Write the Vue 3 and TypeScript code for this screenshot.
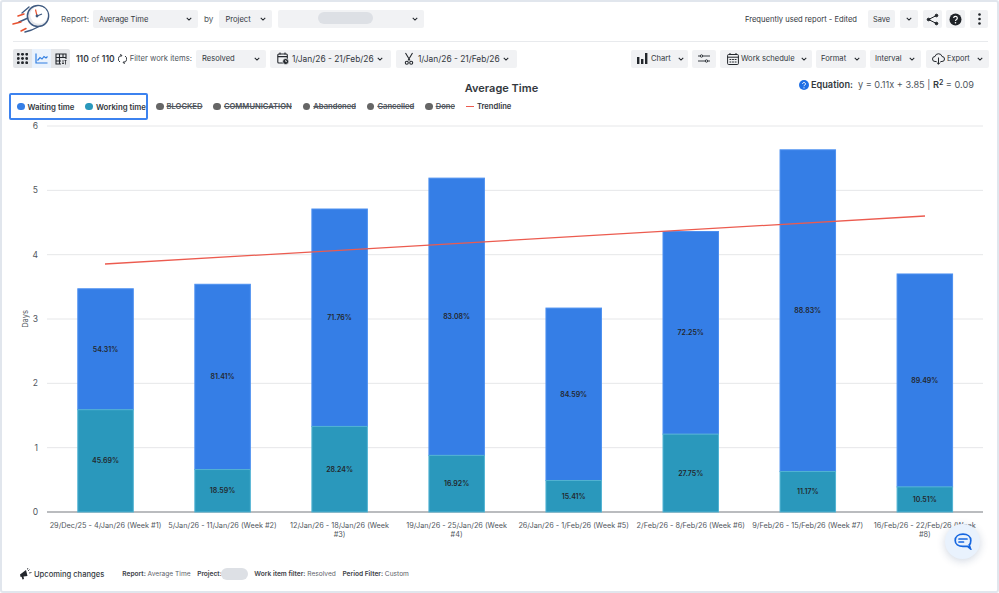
<template>
  <div class="card">
    <header class="row-top">
      <svg class="logo" width="38" height="30" viewBox="0 0 38 30" fill="none">
        <path d="M10 9 L17 3 M7 18 L16 14 M13 28 Q20 26.5 26 23" stroke="#3f5a80" stroke-width="1.4" stroke-linecap="round" />
        <path d="M6 12 L12 10 M1 20 L9 18 M9 27 L14 24.5" stroke="#e8512f" stroke-width="1.5" stroke-linecap="round" />
        <circle cx="26" cy="12" r="10.6" fill="#e6e8ec" stroke="#3f5a80" stroke-width="1.5" />
        <circle cx="27" cy="11" r="8.8" fill="#fff" />
        <path d="M23.5 5.5 L25 12" stroke="#e8512f" stroke-width="1.2" />
        <path d="M25 12 L30 10" stroke="#3f5a80" stroke-width="1.2" />
        <circle cx="25" cy="12" r="1.4" fill="#3f5a80" />
      </svg>
      <span class="lbl report-lbl">Report:</span>
      <div class="ctl w105">Average Time<svg class="chev" viewBox="0 0 8 5"><path d="M1 1l3 3 3-3" /></svg></div>
      <span class="lbl by-lbl">by</span>
      <div class="ctl w53">Project<svg class="chev" viewBox="0 0 8 5"><path d="M1 1l3 3 3-3" /></svg></div>
      <div class="ctl w146"><span class="pill"></span><svg class="chev" viewBox="0 0 8 5"><path d="M1 1l3 3 3-3" /></svg></div>
      <span class="grow"></span>
      <span class="freq">Frequently used report - Edited</span>
      <div class="ctl save">Save</div>
      <div class="ctl sq18"><svg class="chev" viewBox="0 0 8 5"><path d="M1 1l3 3 3-3" /></svg></div>
      <div class="ctl sq19">
        <svg width="13" height="13" viewBox="0 0 13 13" fill="none" stroke="#1f2328" stroke-width="1">
          <path d="M10.5 2.5 L2.5 6.5 L10.5 10.5" />
          <circle cx="10.5" cy="2.5" r="1.3" fill="#1f2328" /><circle cx="2.5" cy="6.5" r="1.3" fill="#1f2328" /><circle cx="10.5" cy="10.5" r="1.3" fill="#1f2328" />
        </svg>
      </div>
      <div class="ctl sq19">
        <svg width="13" height="13" viewBox="0 0 13 13">
          <circle cx="6.5" cy="6.5" r="6" fill="#1f2328" />
          <path d="M4.7 5.1a1.8 1.8 0 1 1 2.8 1.5c-.7.4-1 .7-1 1.5" fill="none" stroke="#fff" stroke-width="1.2" />
          <circle cx="6.5" cy="9.8" r=".8" fill="#fff" />
        </svg>
      </div>
      <div class="ctl sq18">
        <svg width="3" height="12" viewBox="0 0 3 12" fill="#1f2328"><circle cx="1.5" cy="1.5" r="1.3" /><circle cx="1.5" cy="6" r="1.3" /><circle cx="1.5" cy="10.5" r="1.3" /></svg>
      </div>
    </header>

    <div class="divider"></div>

    <div class="row-tools">
      <div class="seg">
        <span class="seg-b gray">
          <svg width="11" height="11" viewBox="0 0 11 11" fill="#23272c">
            <template v-for="y in [1.3, 5.5, 9.7]" :key="y"><circle v-for="x in [1.3, 5.5, 9.7]" :key="x" :cx="x" :cy="y" r="1.45" /></template>
          </svg>
        </span>
        <span class="seg-b blue">
          <svg width="13" height="11" viewBox="0 0 13 11" fill="none" stroke="#2f7de1" stroke-width="1.2">
            <path d="M1 0.5 V10 H12.5" /><path d="M2.5 7.5 L5 4.5 L7 6 L9 3.5 L11 5 L12.5 3.5" />
          </svg>
        </span>
        <span class="seg-b gray">
          <svg width="12" height="12" viewBox="0 0 12 12" fill="none" stroke="#23272c" stroke-width="1.1">
            <path d="M6 11 H1 V1 H11 V6 M1 4.5 H11 M1 8 H6 M4.5 1 V11 M8 1 V4.5" /><path d="M8 7 V11 M7 10 L8 11 L9 10 M10.5 11.5 V7 M9.5 8 L10.5 7 L11.5 8" stroke-width=".8" />
          </svg>
        </span>
      </div>
      <span class="count"><b>110</b> of <b>110</b></span>
      <svg class="refresh" width="9" height="10" viewBox="0 0 9 10" fill="none" stroke="#33383e" stroke-width="1">
        <path d="M3.5 1.5 A3.5 3.5 0 0 0 2 8 M5.5 8.5 A3.5 3.5 0 0 0 7 2" /><path d="M2.2 .4 L3.9 1.4 L2.8 2.8 M6.8 9.6 L5.1 8.6 L6.2 7.2" />
      </svg>
      <span class="lbl filter-lbl">Filter work items:</span>
      <div class="ctl2 w70">Resolved<svg class="chev" viewBox="0 0 8 5"><path d="M1 1l3 3 3-3" /></svg></div>
      <div class="ctl2 date">
        <svg width="12" height="13" viewBox="0 0 12 13" fill="none" stroke="#23272c" stroke-width="1.1">
          <rect x=".8" y="2" width="9.5" height="9" rx="1" /><path d="M.8 4.6 H10.3 M3 .5 V2.5 M8 .5 V2.5" />
          <circle cx="8.7" cy="9.5" r="3" fill="#23272c" stroke="#f1f2f4" stroke-width=".7" /><path d="M8.7 8 V9.6 H10" stroke="#fff" stroke-width=".7" />
        </svg>
        <span class="dt">1/Jan/26 - 21/Feb/26</span><svg class="chev" viewBox="0 0 8 5"><path d="M1 1l3 3 3-3" /></svg>
      </div>
      <div class="ctl2 date d2">
        <svg width="12" height="13" viewBox="0 0 12 13" fill="none" stroke="#23272c" stroke-width="1.1">
          <path d="M2.5 1 L7 8.5 M9.5 1 L5 8.5" /><circle cx="3.8" cy="10.8" r="1.5" /><circle cx="8.2" cy="10.8" r="1.5" />
        </svg>
        <span class="dt">1/Jan/26 - 21/Feb/26</span><svg class="chev" viewBox="0 0 8 5"><path d="M1 1l3 3 3-3" /></svg>
      </div>
      <span class="grow"></span>
      <div class="ctl2 chart-b">
        <svg width="11" height="11" viewBox="0 0 11 11" fill="#23272c"><rect x="0" y="4" width="2.4" height="7" /><rect x="4" y="6" width="2.4" height="5" /><rect x="8" y="0" width="2.4" height="11" /></svg>
        <span class="mr">Chart</span><svg class="chev" viewBox="0 0 8 5"><path d="M1 1l3 3 3-3" /></svg>
      </div>
      <div class="ctl2 sliders">
        <svg width="12" height="9" viewBox="0 0 12 9" fill="none" stroke="#23272c" stroke-width=".9">
          <path d="M0 2 H12 M0 7 H12" /><circle cx="3.5" cy="2" r="1.2" fill="#f1f2f4" /><circle cx="8.5" cy="7" r="1.2" fill="#f1f2f4" />
        </svg>
      </div>
      <div class="ctl2 work">
        <svg width="12" height="12" viewBox="0 0 12 12" fill="none" stroke="#23272c" stroke-width="1">
          <rect x=".6" y="1.5" width="10.8" height="10" rx="1" /><path d="M.6 4.2 H11.4 M3 0 V2 M9 0 V2 M2.5 6.5 H4.3 M5.1 6.5 H6.9 M7.7 6.5 H9.5 M2.5 9 H4.3 M5.1 9 H6.9 M7.7 9 H9.5" />
        </svg>
        <span class="mr">Work schedule</span><svg class="chev" viewBox="0 0 8 5"><path d="M1 1l3 3 3-3" /></svg>
      </div>
      <div class="ctl2 fmt"><span class="mr">Format</span><svg class="chev" viewBox="0 0 8 5"><path d="M1 1l3 3 3-3" /></svg></div>
      <div class="ctl2 intv"><span class="mr">Interval</span><svg class="chev" viewBox="0 0 8 5"><path d="M1 1l3 3 3-3" /></svg></div>
      <div class="ctl2 expo">
        <svg width="13" height="12" viewBox="0 0 13 12" fill="none" stroke="#23272c" stroke-width="1">
          <path d="M4.5 8.5 H3 A2.5 2.5 0 0 1 3 3.5 A3.6 3.6 0 0 1 10 3.5 A2.5 2.5 0 0 1 10 8.5 H8.5" /><path d="M6.5 4.5 V11.2 M4.8 9.5 L6.5 11.2 L8.2 9.5" />
        </svg>
        <span class="mr">Export</span><svg class="chev" viewBox="0 0 8 5"><path d="M1 1l3 3 3-3" /></svg>
      </div>
    </div>

    <div class="title-row">
      <h1>Average Time</h1>
      <div class="equation">
        <svg width="10" height="10" viewBox="0 0 9 9"><circle cx="4.5" cy="4.5" r="4.5" fill="#1f6fe5" /><path d="M3.2 3.5a1.3 1.3 0 1 1 2 1.1c-.5.3-.7.5-.7 1" fill="none" stroke="#fff" stroke-width=".9" /><circle cx="4.5" cy="7" r=".55" fill="#fff" /></svg>
        <b class="eq-b">Equation:</b>
        <span class="eq-v">y = 0.11x + 3.85 | <b>R<sup>2</sup></b> = 0.09</span>
      </div>
    </div>

    <div class="legend">
      <div class="focus">
        <span class="li"><i class="dot" style="background:#357ee6"></i>Waiting time</span>
        <span class="li"><i class="dot" style="background:#2a98bc"></i>Working time</span>
      </div>
      <span v-for="h in hidden" :key="h" class="li off"><i class="dot"></i><s>{{ h }}</s></span>
      <span class="li trend"><i class="dash"></i>Trendline</span>
    </div>

    <svg class="plot" width="995" height="430" viewBox="0 0 995 430">
      <g v-for="t in ticks" :key="t">
        <line x1="45" :x2="981" :y1="yOf(t)" :y2="yOf(t)" :stroke="t === 0 ? '#a3a6aa' : '#e6e7e9'" :stroke-width="t === 0 ? 1.4 : 1" />
        <text x="36" :y="yOf(t) + 3" text-anchor="end" class="tick">{{ t }}</text>
      </g>
      <text class="axis" transform="translate(26 199) rotate(-90)" text-anchor="middle">Days</text>
      <g v-for="(b, i) in bars" :key="i">
        <rect :x="barX(i)" :y="yOf(b.total)" width="55.5" :height="yOf(b.work) - yOf(b.total)" fill="#357ee6" stroke="#4d90f0" stroke-width="1" />
        <rect :x="barX(i)" :y="yOf(b.work)" width="55.5" :height="yOf(0) - yOf(b.work)" fill="#2a98bc" stroke="#52b3d3" stroke-width="1" />
        <text :x="barX(i) + 27.7" :y="(yOf(b.total) + yOf(b.work)) / 2 + 2.5" class="pct" text-anchor="middle">{{ b.waitPct }}</text>
        <text :x="barX(i) + 27.7" :y="(yOf(b.work) + yOf(0)) / 2 + 2.5" class="pct" text-anchor="middle">{{ b.workPct }}</text>
        <text v-for="(ln, k) in b.label" :key="k" :x="barX(i) + 27.7" :y="408 + k * 9" class="xlab" text-anchor="middle">{{ ln }}</text>
      </g>
      <line x1="103" y1="144" x2="923" y2="96" stroke="#ec5b4f" stroke-width="1.3" />
    </svg>

    <footer class="foot">
      <svg width="13" height="12" viewBox="0 0 13 12" fill="#23272c">
        <path d="M1 6.5 L7 2 L8.5 8 L4.5 8.5 L5 11 L3.5 11.5 L2.6 8.8 L1.6 9 Z" /><path d="M9 3 L10.5 1.5 M10 5 L12.5 4.5 M8.5 1.5 L8.8 0" stroke="#23272c" stroke-width=".8" />
      </svg>
      <span class="up">Upcoming changes</span>
      <span class="meta"><b>Report:</b> Average Time</span>
      <span class="meta"><b>Project:</b></span><i class="foot-pill"></i>
      <span class="meta"><b>Work item filter:</b> Resolved</span>
      <span class="meta"><b>Period Filter:</b> Custom</span>
    </footer>

    <button class="chat" aria-label="Chat">
      <svg width="18" height="17" viewBox="0 0 18 17" fill="none" stroke="#1667e0" stroke-width="1.7">
        <path d="M9 1.2 C4.5 1.2 1.2 3.6 1.2 7.4 C1.2 11.2 4.5 13.4 9 13.4 L13.5 13.4 L16.5 15.8 L15.2 12 C16.3 11 16.8 9.3 16.8 7.4 C16.8 3.6 13.5 1.2 9 1.2 Z" />
        <path d="M5 6 H13 M5 9 H9.5" stroke-linecap="round" />
      </svg>
    </button>
  </div>
</template>

<script setup lang="ts">
interface Bar {
  total: number
  work: number
  waitPct: string
  workPct: string
  label: string[]
}

const hidden: string[] = ['BLOCKED', 'COMMUNICATION', 'Abandoned', 'Cancelled', 'Done']
const ticks: number[] = [0, 1, 2, 3, 4, 5, 6]

const bars: Bar[] = [
  { total: 3.47, work: 1.59, waitPct: '54.31%', workPct: '45.69%', label: ['29/Dec/25 - 4/Jan/26 (Week #1)'] },
  { total: 3.54, work: 0.66, waitPct: '81.41%', workPct: '18.59%', label: ['5/Jan/26 - 11/Jan/26 (Week #2)'] },
  { total: 4.71, work: 1.33, waitPct: '71.76%', workPct: '28.24%', label: ['12/Jan/26 - 18/Jan/26 (Week', '#3)'] },
  { total: 5.19, work: 0.88, waitPct: '83.08%', workPct: '16.92%', label: ['19/Jan/26 - 25/Jan/26 (Week', '#4)'] },
  { total: 3.17, work: 0.49, waitPct: '84.59%', workPct: '15.41%', label: ['26/Jan/26 - 1/Feb/26 (Week #5)'] },
  { total: 4.36, work: 1.21, waitPct: '72.25%', workPct: '27.75%', label: ['2/Feb/26 - 8/Feb/26 (Week #6)'] },
  { total: 5.63, work: 0.63, waitPct: '88.83%', workPct: '11.17%', label: ['9/Feb/26 - 15/Feb/26 (Week #7)'] },
  { total: 3.7, work: 0.39, waitPct: '89.49%', workPct: '10.51%', label: ['16/Feb/26 - 22/Feb/26 (Week', '#8)'] },
]

const yOf = (v: number): number => 392 - v * 64.33
const barX = (i: number): number => 75.8 + i * 117.04
</script>

<style>
html, body { margin: 0; padding: 0; background: #fff; }
</style>

<style scoped>
.card {
  position: relative;
  box-sizing: border-box;
  width: 999px;
  height: 593px;
  overflow: hidden;
  border: 2px solid #e1e6ed;
  border-radius: 3px;
  background: #fff;
  display: flex;
  flex-direction: column;
  font-family: Inter, "Liberation Sans", sans-serif;
  color: #33383e;
  font-size: 7.6px;
}
.row-top {
  display: flex;
  align-items: center;
  height: 30px;
  margin-top: 2px;
  padding: 0 9px 0 10px;
  flex: none;
}
.logo { flex: none; margin-right: 11px; }
.lbl { color: #50565d; white-space: nowrap; }
.report-lbl { width: 32px; font-size: 8.2px; }
.by-lbl { margin: 0 6px; font-size: 8.2px; }
.grow { flex: 1; }
.ctl, .ctl2 {
  display: flex;
  align-items: center;
  box-sizing: border-box;
  background: #f1f2f4;
  border-radius: 2px;
  white-space: nowrap;
  color: #33383e;
}
.ctl svg, .ctl2 svg { flex: none; }
.ctl { height: 18px; padding: 0 6px; justify-content: space-between; }
.chev {
  flex: none;
  width: 6px;
  height: 4px;
  fill: none;
  stroke: #23272c;
  stroke-width: 1.4;
}
.w105 { width: 105px; }
.w53 { width: 53px; margin-right: 6px; }
.w146 { width: 146px; position: relative; justify-content: flex-end; }
.pill {
  position: absolute;
  left: 40px;
  top: 2px;
  width: 55px;
  height: 12px;
  border-radius: 6px;
  background: #dde0e5;
}
.freq { margin-right: 11px; color: #33383e; white-space: nowrap; }
.save { width: 27px; justify-content: center; margin-right: 5px; padding: 0; font-size: 7.4px; }
.sq18 { width: 18px; justify-content: center; padding: 0; margin-right: 5px; }
.sq19 { width: 19px; justify-content: center; padding: 0; margin-right: 4px; }
.sq19 + .sq19 { margin-right: 5px; }
.sq18:last-child { margin-right: 0; }
.divider { height: 1px; margin: 7px 9px 0 11px; background: #e8eaed; flex: none; }
.row-tools {
  display: flex;
  align-items: center;
  height: 19px;
  margin-top: 7px;
  padding: 0 8px 0 11px;
  flex: none;
}
.seg { display: flex; border-radius: 2px; overflow: hidden; margin-right: 6px; }
.seg-b { width: 19px; height: 19px; display: flex; align-items: center; justify-content: center; }
.gray { background: #e4e6e9; }
.blue { background: #e9f2fd; }
.count { white-space: nowrap; color: #50565d; font-size: 8.5px; }
.count b { font-weight: 600; color: #33383e; }
.refresh { margin: 0 3px; flex: none; }
.filter-lbl { margin-right: 4px; font-size: 7.7px; }
.ctl2 { height: 18px; padding: 0 6px; gap: 3px; justify-content: space-between; }
.mr { margin-right: auto; }
.w70 { width: 70px; margin-right: 4px; }
.date { width: 121px; margin-right: 5px; padding: 0 8px 0 7px; }
.dt { font-size: 8.4px; margin-right: auto; }
.d2 { margin-right: 0; }
.chart-b { width: 57px; margin-right: 4px; padding-right: 4px; }
.sliders { width: 24px; justify-content: center; padding: 0; margin-right: 4px; }
.work { width: 92px; margin-right: 4px; padding: 0 5px 0 7px; gap: 2px; }
.fmt { width: 50px; margin-right: 4px; padding-left: 5px; }
.intv { width: 51px; margin-right: 5px; padding-left: 5px; }
.expo { width: 63px; gap: 2px; }
.expo .mr { font-size: 7.4px; }
.title-row {
  position: relative;
  box-sizing: border-box;
  height: 25px;
  padding-top: 14px;
  flex: none;
  display: flex;
  justify-content: center;
  align-items: center;
}
h1 {
  margin: 0;
  font-size: 11px;
  font-weight: 600;
  color: #33383e;
  position: relative;
  left: 2px;
}
.equation {
  position: absolute;
  right: 23px;
  top: 11px;
  display: flex;
  align-items: center;
  gap: 2px;
  font-size: 9.2px;
  white-space: nowrap;
}
.eq-b { font-weight: 600; }
.eq-v { color: #50565d; margin-left: 3px; }
.eq-v b { font-weight: 600; color: #33383e; }
sup { font-size: 7px; line-height: 0; vertical-align: 3.5px; }
.legend {
  display: flex;
  align-items: center;
  gap: 11px;
  height: 27px;
  margin-left: 7px;
  flex: none;
  font-size: 7.6px;
  font-weight: 600;
  color: #33383e;
  white-space: nowrap;
}
.focus {
  display: flex;
  align-items: center;
  gap: 11px;
  box-sizing: border-box;
  height: 27px;
  width: 139px;
  padding: 0 6px;
  border: 2px solid #3c82ef;
  border-radius: 2px;
  margin-right: -3px;
  font-size: 7.8px;
}
.li { display: inline-flex; align-items: center; gap: 3px; }
.dot {
  width: 7.5px;
  height: 7.5px;
  border-radius: 50%;
  background: #666;
  flex: none;
}
.off { color: #50565d; }
.dash { width: 8px; height: 1.2px; background: #ec5b4f; }
.plot { display: block; flex: none; }
.tick { font: 8.5px Inter, "Liberation Sans", sans-serif; fill: #50565d; }
.axis { font: 7.5px Inter, "Liberation Sans", sans-serif; fill: #50565d; }
.pct { font: 600 7px Inter, "Liberation Sans", sans-serif; fill: #23272c; }
.xlab { font: 7.3px Inter, "Liberation Sans", sans-serif; fill: #50565d; }
.foot {
  display: flex;
  align-items: center;
  height: 14px;
  margin-top: 17px;
  padding-left: 17px;
  flex: none;
}
.up { margin: 0 18px 0 2px; font-weight: 500; font-size: 7.6px; color: #33383e; white-space: nowrap; }
.meta { font-size: 6.6px; color: #5c6269; margin-right: 6.6px; white-space: nowrap; }
.meta b { font-weight: 600; color: #3c4147; }
.foot-pill { width: 27px; height: 12px; border-radius: 6px; background: #dde0e5; margin: 0 6px 0 -7px; flex: none; }
.chat {
  position: absolute;
  left: 943px;
  top: 522px;
  width: 35px;
  height: 35px;
  padding: 0;
  border: 0;
  border-radius: 50%;
  background: #e9f2fd;
  box-shadow: 0 2px 8px rgba(30, 60, 110, .2);
  display: flex;
  align-items: center;
  justify-content: center;
}
</style>
